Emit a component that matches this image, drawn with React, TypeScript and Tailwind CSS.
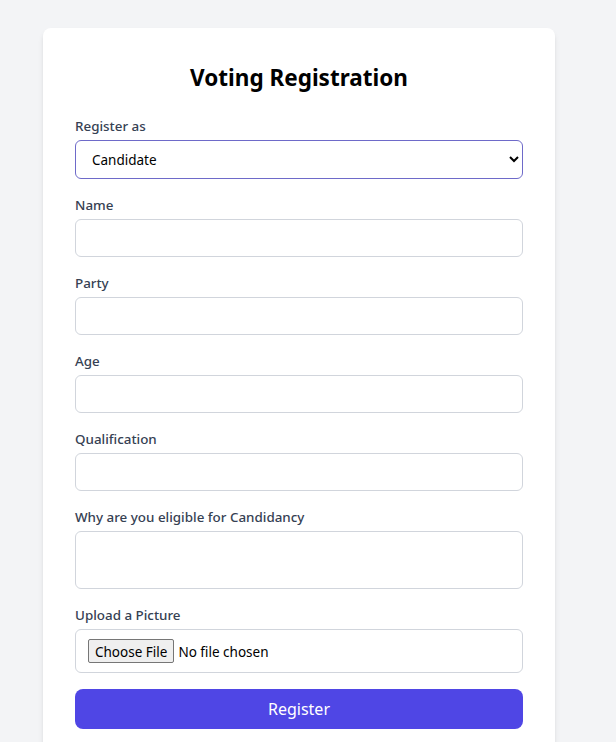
import React from "react";

const font = { fontFamily: '"Noto Sans", "Open Sans", sans-serif' };

function Field({ label, children }: { label: string; children: React.ReactNode }) {
  return (
    <div className="mb-4">
      <label className="block text-[13.4px] leading-5 font-medium text-gray-700 mb-1">{label}</label>
      {children}
    </div>
  );
}

export default function App() {
  const inputCls =
    "block w-full px-3 py-2 text-sm leading-5 bg-white border border-gray-300 rounded-md outline-none";
  return (
    <div className="min-h-screen bg-gray-100 pt-7 pb-8 text-[#111]" style={font}>
      <div className="mx-auto w-[512px] bg-white rounded-lg shadow-md p-8 relative left-[-9px]">
        <h1 className="text-[22.5px] leading-8 font-bold text-center text-black pt-[2px] mb-[22px]">Voting Registration</h1>
        <Field label="Register as">
          <select
            className="block w-full pl-3 pr-2 py-2 text-[13.5px] leading-5 h-[39px] bg-white border border-[#6e6ac9] rounded-md outline-none text-black"
            defaultValue="Candidate"
          >
            <option>Candidate</option>
            <option>Voter</option>
          </select>
        </Field>
        <Field label="Name">
          <input type="text" className={inputCls} />
        </Field>
        <Field label="Party">
          <input type="text" className={inputCls} />
        </Field>
        <Field label="Age">
          <input type="number" className={inputCls} />
        </Field>
        <Field label="Qualification">
          <input type="text" className={inputCls} />
        </Field>
        <Field label="Why are you eligible for Candidancy">
          <textarea rows={2} className={inputCls + " resize-none"} />
        </Field>
        <Field label="Upload a Picture">
          <input
            type="file"
            className="block w-full h-[44px] px-3 py-[9px] text-[13.5px] leading-6 bg-white border border-gray-300 rounded-md outline-none text-black file:h-[24px] file:px-[6px] file:mr-[4px] file:border file:border-[#767676] file:bg-[#efefef] file:rounded-[2px] file:text-[13.5px] file:text-black"
          />
        </Field>
        <button className="w-full h-10 text-base leading-6 text-white bg-[#4f46e5] rounded-lg">Register</button>
      </div>
    </div>
  );
}
